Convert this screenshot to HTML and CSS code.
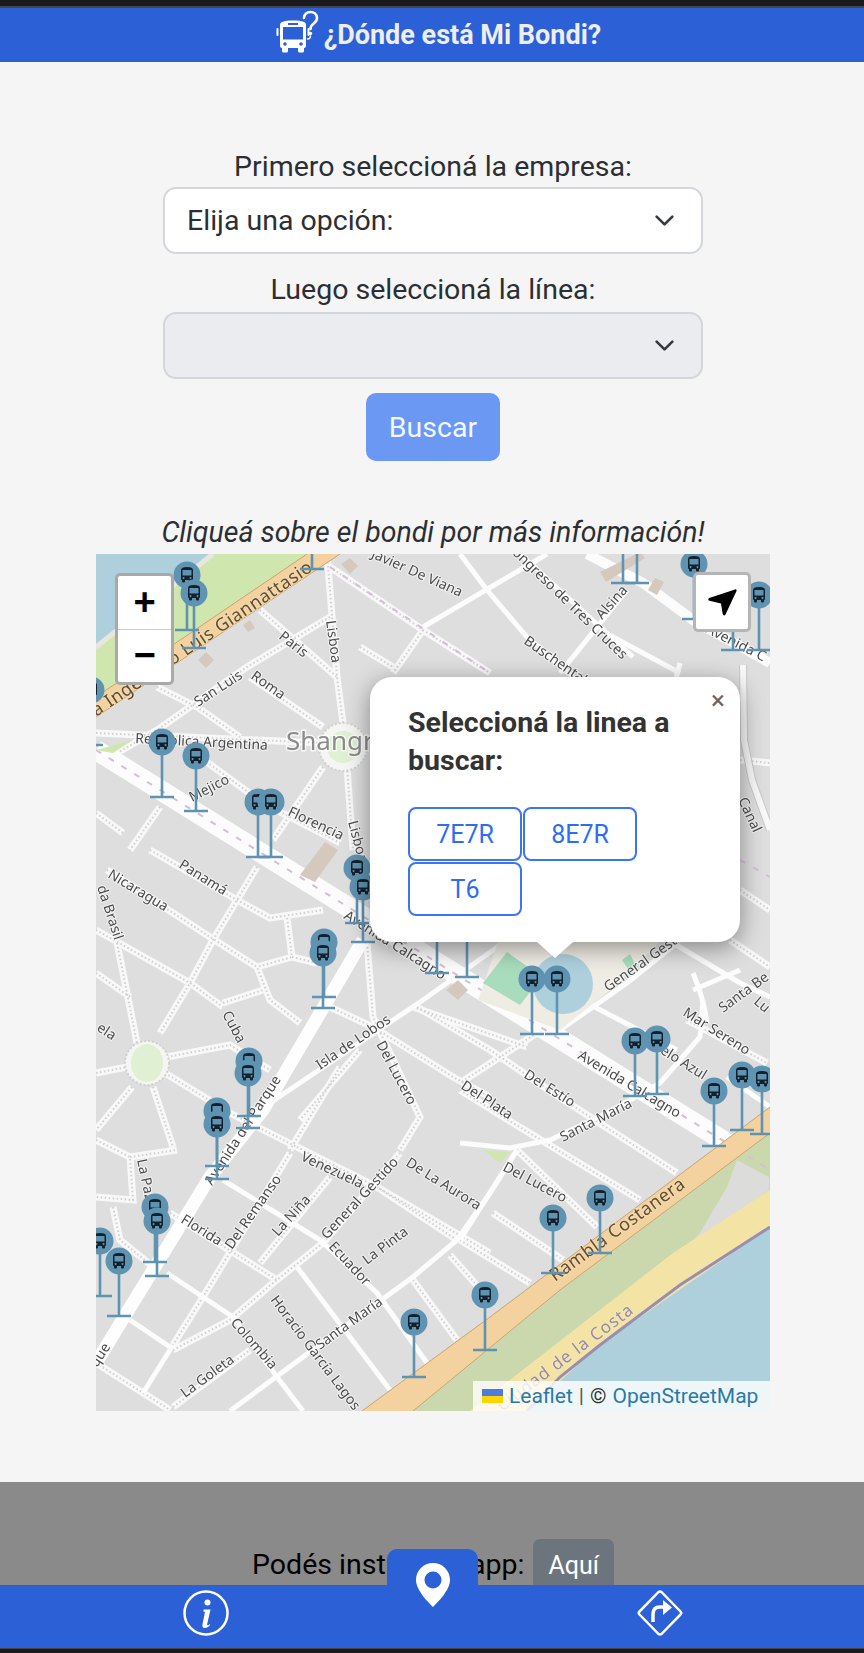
FILE: index.html
```html
<!DOCTYPE html>
<html lang="es">
<head>
<meta charset="utf-8">
<title>¿Dónde está Mi Bondi?</title>
<link rel="stylesheet" href="styles.css">
</head>
<body>
<div class="page">
  <div class="statusbar"></div>
  <header class="header">
    <svg class="logo" viewBox="0 0 44 42" aria-hidden="true">
      <path class="logo-fill" fill-rule="evenodd" d="M5 14c0-3 3-4.500 13-4.500S31 11 31 14v21a2 2 0 0 1-2 2v3a1.500 1.500 0 0 1-1.500 1.500h-3A1.500 1.500 0 0 1 23 40v-3H13v3a1.500 1.500 0 0 1-1.500 1.500h-3A1.500 1.500 0 0 1 7 40v-3a2 2 0 0 1-2-2ZM13 12v2h10v-2ZM8 16v12.500h20V16Z"/>
      <circle class="logo-hole" cx="10" cy="33" r="1.800"/>
      <circle class="logo-hole" cx="26" cy="33" r="1.800"/>
      <rect class="logo-fill" x="1.500" y="17" width="2" height="8" rx="1"/>
      <rect class="logo-fill" x="32.500" y="17" width="2" height="8" rx="1"/>
      <path class="logo-stroke" d="M29 7c0-8 13-8 13 0 0 6-6.500 5-6.500 11"/>
      <circle class="logo-fill" cx="35.500" cy="22.500" r="1.700"/>
      <path class="logo-stroke thin" d="M35.500 25c0 2-1 3-3 3"/>
    </svg>
    <h1 class="title">¿Dónde está Mi Bondi?</h1>
  </header>

  <main class="main">
    <form class="form">
      <label class="label">Primero seleccioná la empresa:</label>
      <div class="select">
        <span>Elija una opción:</span>
        <svg class="chevron" viewBox="0 0 16 16"><path d="M2 5l6 6 6-6"/></svg>
      </div>
      <label class="label label-second">Luego seleccioná la línea:</label>
      <div class="select select-disabled">
        <span></span>
        <svg class="chevron" viewBox="0 0 16 16"><path d="M2 5l6 6 6-6"/></svg>
      </div>
      <button class="search" type="button">Buscar</button>
    </form>

    <p class="hint">Cliqueá sobre el bondi por más información!</p>

    <section class="map">
      <svg class="tiles" viewBox="96 554 674 857" aria-label="Mapa">
        <defs>
          <g id="m">
            <path class="pole" d="M0 0V55M-12 55H12"/>
            <circle class="pin" r="13.500"/>
            <path class="bus" fill-rule="evenodd" d="M-6-5c0-2 2-3 6-3s6 1 6 3v9a1 1 0 0 1-1 1v1.500a1 1 0 0 1-1 1h-1a1 1 0 0 1-1-1V5h-4v1.500a1 1 0 0 1-1 1h-1a1 1 0 0 1-1-1V5a1 1 0 0 1-1-1ZM-4.500-5V0.500h9V-5ZM-3.500 2a1 1 0 1 0 .1 0ZM3.500 2a1 1 0 1 0 .1 0Z"/>
          </g>
          <g id="walks">
            <path d="M330 567L423 630 490 673"/>
            <path d="M327 554L337 677 343 723"/>
            <path d="M260 610L337 677"/>
            <path d="M330 617L247 667 157 730 117 753"/>
            <path d="M157 687L197 707 240 737"/>
            <path d="M250 677L323 727"/>
            <path d="M96 733L323 743"/>
            <path d="M200 757L263 803 340 843"/>
            <path d="M323 767L273 840"/>
            <path d="M347 767L353 850"/>
            <path d="M160 807L130 850"/>
            <path d="M96 813L123 833"/>
            <path d="M423 630L393 673"/>
            <path d="M360 647L393 667"/>
            <path d="M107 870L210 937 257 967 270 1000 300 1023"/>
            <path d="M330 1007L373 1027 453 1077 490 1097"/>
            <path d="M150 850L237 900 270 918 323 910"/>
            <path d="M287 918L292 957 257 967"/>
            <path d="M292 957L317 963"/>
            <path d="M96 930L190 983 223 1007"/>
            <path d="M96 973L130 997"/>
            <path d="M223 1003L263 990"/>
            <path d="M257 867L213 940 190 983 160 1033"/>
            <path d="M117 943L137 1043"/>
            <path d="M167 1057L230 1045 270 1070"/>
            <path d="M96 1073L127 1067"/>
            <path d="M132 1087L96 1130"/>
            <path d="M153 1087L173 1147"/>
            <path d="M165 1073L230 1113 297 1147"/>
            <path d="M340 1067L290 1150"/>
            <path d="M367 943L373 1017 420 1117 400 1150"/>
            <path d="M417 1007L490 1050 553 1093 677 1173"/>
            <path d="M96 1140L130 1157 133 1200 96 1197"/>
            <path d="M130 1157L177 1150"/>
            <path d="M290 1153L203 1297 173 1345"/>
            <path d="M113 1207L120 1240 157 1270"/>
            <path d="M173 1350L230 1320 273 1283 323 1243"/>
            <path d="M457 1240L377 1187 297 1147"/>
            <path d="M377 1187L490 1253"/>
            <path d="M400 1153L323 1243"/>
            <path d="M330 1177L260 1263"/>
            <path d="M413 1280L457 1340"/>
            <path d="M450 1255L487 1297"/>
            <path d="M96 1363L170 1410"/>
            <path d="M173 1407L250 1350"/>
            <path d="M170 1213L277 1280"/>
            <path d="M460 1090L513 1123 640 1200"/>
            <path d="M493 1213L563 1260"/>
            <path d="M460 1240L530 1283"/>
            <path d="M517 1150L597 1227"/>
            <path d="M537 1033L460 1083"/>
            <path d="M687 1020L767 1063"/>
            <path d="M740 760L770 763"/>
            <path d="M740 890L770 910"/>
            <path d="M730 940L770 967"/>
            <path d="M413 1007L527 1047"/>
            <path d="M360 1050L300 1120"/>
          </g>
        </defs>

        <g class="base">
          <rect class="land" x="96" y="554" width="674" height="857"/>

          <use class="walk-base" href="#walks"/>
          <use class="walk-dots" href="#walks"/>

          <g class="road">
            <path d="M423 627L547 554"/>
            <path d="M460 554L487 590 527 637 573 677"/>
            <path d="M560 673L627 590"/>
            <path d="M520 554L633 657"/>
            <path d="M600 630L680 673"/>
            <path d="M680 663L673 690"/>
            <path d="M270 1103L423 1000 503 943"/>
            <path d="M223 1180L320 1240 377 1293 427 1363"/>
            <path d="M167 1273L233 1317 277 1377 303 1411"/>
            <path d="M130 1320L170 1347"/>
            <path d="M297 1267L390 1390"/>
            <path d="M173 1345L143 1393"/>
            <path d="M230 1411L303 1357 413 1277 457 1240 490 1193 517 1150"/>
            <path d="M460 1143L510 1148 550 1140 607 1113 660 1083 700 1037 703 1000"/>
            <path d="M517 1150L460 1240"/>
            <path d="M727 1077L770 1107"/>
            <path d="M673 943L740 983 770 997"/>
            <path d="M693 973C700 990 705 1005 707 1023"/>
            <path d="M587 1003L677 1050"/>
            <path d="M560 1030L627 983 677 943"/>
            <path d="M693 990L740 970"/>
          </g>
          <g class="road-thick">
            <path d="M587 554L643 583 693 620 770 663"/>
          </g>
          <path class="canal-edge" d="M743 665L744 740 752 780 770 830"/>
          <path class="canal" d="M743 665L744 740 752 780 770 830"/>

          <path class="ave-wide" d="M96 750L735 1148"/>
          <path class="ave-dash" d="M96 750L770 1170"/>
          <path class="ave-dash" d="M330 567L490 673"/>
          <path class="ave-dash" d="M740 860L770 877"/>
          <path class="park-road" d="M363 940L263 1110 210 1177 96 1363"/>

          <circle class="plaza" cx="147" cy="1063" r="22"/>
          <ellipse class="plaza-in" cx="147" cy="1063" rx="16" ry="19"/>
          <circle class="plaza" cx="343" cy="747" r="24"/>
          <circle class="plaza-in" cx="343" cy="747" r="16"/>

          <polygon class="green" points="96,650 213,554 340,554 96,717"/>
          <polygon class="water" points="96,554 213,554 96,645"/>
          <polyline class="shore" points="96,647 213,554"/>
          <polygon class="orange" points="96,697 307,554 340,554 96,717"/>
          <polyline class="orange-edge" points="96,697 307,554"/>
          <polyline class="orange-edge" points="96,717 340,554"/>
          <polygon class="green" points="96,750 133,740 113,753"/>
          <polygon class="green" points="483,1150 510,1152 500,1163"/>

          <polygon class="green2" points="413,1411 560,1290 770,1133 770,1411"/>
          <polygon class="patch" points="673,1260 700,1233 727,1187 737,1160 769,1177 769,1190"/>
          <path class="ave-dash" d="M735 1148L770 1170"/>
          <polygon class="sand" points="470,1411 493,1393 673,1253 770,1190 770,1230 600,1345 527,1411"/>
          <polygon class="water" points="527,1411 600,1345 770,1227 770,1411"/>
          <polyline class="shoreline" points="527,1411 560,1377 600,1345 680,1285 770,1227"/>
          <polygon class="orange" points="362,1411 490,1317 770,1107 770,1133 560,1290 413,1411"/>
          <polyline class="orange-edge" points="362,1411 490,1317 770,1107"/>
          <polyline class="orange-edge" points="413,1411 560,1290 770,1133"/>

          <polygon class="park" points="498,942 660,942 610,990 560,1030 478,1000"/>
          <polygon class="pitch" points="483,983 507,952 542,977 520,1005"/>
          <ellipse class="pond" cx="563" cy="984" rx="30" ry="30"/>
          <polygon class="pitch" points="622,960 630,954 637,968 630,972"/>

          <polygon class="bld" points="300,875 315,882 338,850 325,842"/>
          <polygon class="bld" points="341,564 350,558 358,566 350,574"/>
          <polygon class="bld" points="198,660 206,652 214,660 206,668"/>
          <polygon class="bld" points="243,625 250,620 255,628 248,632"/>
          <polygon class="bld" points="648,590 655,578 664,582 657,595"/>
          <polygon class="bld" points="446,990 458,980 468,990 458,1000"/>
          <polygon class="bld" points="600,572 640,552 645,558 606,582"/>

          <text class="lbl lbl-main" text-anchor="end" transform="translate(314 570) rotate(-34)">Avenida Ingeniero Luis Giannattasio</text>
          <text class="lbl" text-anchor="end" transform="translate(460 597) rotate(24)">Javier De Viana</text>
          <text class="lbl" transform="translate(278 638) rotate(38)">Paris</text>
          <text class="lbl" transform="translate(326 621) rotate(82)">Lisboa</text>
          <text class="lbl" transform="translate(198 707) rotate(-33)">San Luis</text>
          <text class="lbl" transform="translate(250 678) rotate(35)">Roma</text>
          <text class="lbl" transform="translate(135 743) rotate(3)">República Argentina</text>
          <text class="lbl-town" x="286" y="750">Shangrilá</text>
          <text class="lbl" transform="translate(192 802) rotate(-27)">Mejico</text>
          <text class="lbl" transform="translate(287 815) rotate(25)">Florencia</text>
          <text class="lbl" transform="translate(348 822) rotate(75)">Lisboa</text>
          <text class="lbl" transform="translate(178 867) rotate(32)">Panamá</text>
          <text class="lbl" transform="translate(107 877) rotate(31)">Nicaragua</text>
          <text class="lbl" transform="translate(97 887) rotate(72)">da Brasil</text>
          <text class="lbl" transform="translate(222 1014) rotate(62)">Cuba</text>
          <text class="lbl" transform="translate(96 1030) rotate(33)">ela</text>
          <text class="lbl" transform="translate(320 1070) rotate(-34)">Isla de Lobos</text>
          <text class="lbl" transform="translate(376 1044) rotate(62)">Del Lucero</text>
          <text class="lbl" transform="translate(460 1088) rotate(33)">Del Plata</text>
          <text class="lbl" transform="translate(343 918) rotate(32)">Avenida Calcagno</text>
          <text class="lbl" transform="translate(212 1186) rotate(-57)">Avenida del Parque</text>
          <text class="lbl" transform="translate(137 1160) rotate(78)">La Paz</text>
          <text class="lbl" transform="translate(180 1222) rotate(32)">Florida</text>
          <text class="lbl" transform="translate(232 1250) rotate(-55)">Del Remanso</text>
          <text class="lbl" transform="translate(278 1237) rotate(-48)">La Niña</text>
          <text class="lbl" transform="translate(327 1240) rotate(-47)">General Gestido</text>
          <text class="lbl" transform="translate(300 1160) rotate(25)">Venezuela</text>
          <text class="lbl" transform="translate(405 1165) rotate(32)">De La Aurora</text>
          <text class="lbl" transform="translate(328 1247) rotate(47)">Ecuador</text>
          <text class="lbl" transform="translate(367 1265) rotate(-37)">La Pinta</text>
          <text class="lbl" transform="translate(320 1350) rotate(-36)">Santa María</text>
          <text class="lbl" transform="translate(270 1300) rotate(53)">Horacio García Lagos</text>
          <text class="lbl" transform="translate(230 1323) rotate(49)">Colombia</text>
          <text class="lbl" transform="translate(185 1398) rotate(-36)">La Goleta</text>
          <text class="lbl" transform="translate(97 1368) rotate(-57)">que</text>
          <text class="lbl" transform="translate(577 1058) rotate(31)">Avenida Calcagno</text>
          <text class="lbl" transform="translate(523 1077) rotate(32)">Del Estío</text>
          <text class="lbl" transform="translate(563 1142) rotate(-27)">Santa María</text>
          <text class="lbl" transform="translate(502 1170) rotate(28)">Del Lucero</text>
          <text class="lbl-big" transform="translate(555 1282) rotate(-36)">Rambla Costanera</text>
          <text class="lbl-area" text-anchor="end" transform="translate(635 1312) rotate(-37)">Ciudad de la Costa</text>
          <text class="lbl" transform="translate(608 992) rotate(-35)">General Gestido</text>
          <text class="lbl" transform="translate(682 1015) rotate(32)">Mar Sereno</text>
          <text class="lbl" transform="translate(723 1013) rotate(-36)">Santa Be</text>
          <text class="lbl" transform="translate(753 1003) rotate(40)">Lu</text>
          <text class="lbl" text-anchor="end" transform="translate(703 1080) rotate(32)">Cielo Azul</text>
          <text class="lbl" text-anchor="end" transform="translate(622 660) rotate(44)">Congreso de Tres Cruces</text>
          <text class="lbl" transform="translate(602 620) rotate(-48)">Alsina</text>
          <text class="lbl" transform="translate(523 643) rotate(35)">Buschental</text>
          <text class="lbl" transform="translate(705 632) rotate(27)">Avenida C</text>
          <text class="lbl" transform="translate(738 800) rotate(65)">Canal</text>
        </g>

        <use href="#m" x="312" y="514"/>
        <use href="#m" x="623" y="528"/>
        <use href="#m" x="637" y="528"/>
        <use href="#m" x="187" y="575"/>
        <use href="#m" x="194" y="593"/>
        <use href="#m" x="91" y="690"/>
        <use href="#m" x="694" y="564"/>
        <use href="#m" x="759" y="595"/>
        <use href="#m" x="733" y="595"/>
        <use href="#m" x="162" y="742"/>
        <use href="#m" x="196" y="756"/>
        <use href="#m" x="258" y="802"/>
        <use href="#m" x="271" y="802"/>
        <use href="#m" x="357" y="868"/>
        <use href="#m" x="363" y="887"/>
        <use href="#m" x="437" y="918"/>
        <use href="#m" x="467" y="922"/>
        <use href="#m" x="324" y="942"/>
        <use href="#m" x="323" y="953"/>
        <use href="#m" x="532" y="979"/>
        <use href="#m" x="557" y="979"/>
        <use href="#m" x="657" y="1039"/>
        <use href="#m" x="635" y="1041"/>
        <use href="#m" x="249" y="1061"/>
        <use href="#m" x="248" y="1073"/>
        <use href="#m" x="742" y="1075"/>
        <use href="#m" x="762" y="1079"/>
        <use href="#m" x="714" y="1091"/>
        <use href="#m" x="217" y="1111"/>
        <use href="#m" x="217" y="1124"/>
        <use href="#m" x="155" y="1207"/>
        <use href="#m" x="157" y="1221"/>
        <use href="#m" x="600" y="1198"/>
        <use href="#m" x="553" y="1218"/>
        <use href="#m" x="100" y="1241"/>
        <use href="#m" x="119" y="1261"/>
        <use href="#m" x="485" y="1295"/>
        <use href="#m" x="414" y="1322"/>
      </svg>

      <div class="zoom">
        <span class="zoom-btn zoom-in">+</span>
        <span class="zoom-btn">−</span>
      </div>

      <div class="locate">
        <svg viewBox="0 0 32 32"><path d="M29 3.500c1-.6 2 .4 1.500 1.500L19.500 28.500c-.7 1.500-2.500 1.200-2.800-.4L15 17.500 3.500 14.800c-1.500-.4-1.700-2.300-.3-2.900Z"/></svg>
      </div>

      <div class="popup">
        <button class="popup-close" type="button">×</button>
        <h2 class="popup-title">Seleccioná la linea a buscar:</h2>
        <div class="lines">
          <button class="line" type="button">7E7R</button>
          <button class="line" type="button">8E7R</button>
          <button class="line" type="button">T6</button>
        </div>
      </div>

      <div class="attrib">
        <svg class="flag" viewBox="0 0 12 8"><path class="flag-b" d="M0 0h12v4H0z"/><path class="flag-y" d="M0 4h12v4H0z"/></svg>
        <a>Leaflet</a><span class="sep">|</span><span>©</span><a>OpenStreetMap</a>
      </div>
    </section>
  </main>

  <section class="install">
    <span class="install-text">Podés instalar la app:</span>
    <button class="install-btn" type="button">Aquí</button>
  </section>

  <nav class="nav">
    <svg class="nav-icon" viewBox="0 0 46 46">
      <circle class="nav-line" cx="23" cy="23" r="21.500"/>
      <circle class="nav-fill" cx="24.500" cy="12.500" r="3"/>
      <path class="nav-fill" d="M20.500 19.500h7l-3.300 14.500c-.3 1.700 1 1.700 2.500.2l.6.6c-2 2.700-4.300 3.600-6.300 3.200-1.600-.4-1.900-2-1.500-3.700l2.500-12.300-1.500-.5Z"/>
    </svg>
    <div class="nav-tab">
      <svg class="pin-icon" viewBox="0 0 34 44"><path fill-rule="evenodd" d="M17 0C7.500 0 0 7.500 0 17c0 10 12 22 17 27 5-5 17-17 17-27C34 7.500 26.500 0 17 0Zm0 8.500a8.500 8.500 0 1 1 0 17 8.500 8.500 0 0 1 0-17Z"/></svg>
    </div>
    <svg class="nav-icon" viewBox="0 0 46 46">
      <path class="nav-line" d="M20.500 3c1.500-2 3.500-2 5 0l18 18.500c1 1 1 2 0 3l-18 18.500c-1.500 2-3.500 2-5 0L2.500 24.500c-1-1-1-2 0-3Z"/>
      <path class="nav-line wide" d="M16 32V24c0-5 3-7 7-7h5"/>
      <path class="nav-fill" d="M26 10l9 7.500-9 7.500Z"/>
    </svg>
  </nav>
  <div class="statusbar-bottom"></div>
</div>
</body>
</html>
```

FILE: styles.css
```css
* { box-sizing: border-box; }

html, body { margin: 0; padding: 0; }

body {
  background: #f5f5f5;
  font-family: Roboto, "Liberation Sans", sans-serif;
  color: #212529;
}

.page {
  position: relative;
  width: 864px;
  height: 1653px;
  overflow: hidden;
  display: flex;
  flex-direction: column;
}

.statusbar {
  height: 8px;
  background: #1a1a1e;
  border-bottom: 2px solid #44464c;
}

.header {
  height: 54px;
  background: #2b60d6;
  display: flex;
  align-items: center;
  justify-content: center;
  gap: 5px;
  padding-left: 12px;
}

.logo { width: 44px; height: 42px; margin-top: -6px; overflow: visible; }
.logo-fill { fill: #fff; }
.logo-hole { fill: #2b60d6; }
.logo-stroke { fill: none; stroke: #fff; stroke-width: 2.600; stroke-linecap: round; }
.logo-stroke.thin { stroke-width: 1.400; }

.title {
  margin: 0;
  font-size: 27px;
  font-weight: 700;
  color: #eeeeee;
}

.main {
  flex: 1;
  padding: 84px 0 0 96px;
  display: flex;
  flex-direction: column;
  align-items: flex-start;
}

.form {
  width: 674px;
  display: flex;
  flex-direction: column;
  align-items: center;
}

.label {
  font-size: 28.500px;
  line-height: 41px;
  height: 41px;
  color: #2b2f33;
}

.label-second { margin-top: 15px; height: 43px; }

.select {
  width: 540px;
  height: 67px;
  flex: none;
  border: 2px solid #d3d6da;
  border-radius: 13px;
  background: #fff;
  display: flex;
  align-items: center;
  justify-content: space-between;
  padding: 0 26px 0 22px;
  font-size: 28.500px;
  color: #2b2f33;
}

.select-disabled { background: #eaecef; }

.chevron { width: 21px; height: 21px; fill: none; stroke: #343a40; stroke-width: 2; stroke-linecap: round; stroke-linejoin: round; }

.search {
  margin-top: 14px;
  width: 134px;
  height: 68px;
  border: 0;
  border-radius: 10px;
  background: #6b98f3;
  color: #f4f7fe;
  font: 400 28.500px Roboto, sans-serif;
}

.hint {
  width: 674px;
  margin: 53px 0 0;
  height: 40px;
  line-height: 38px;
  text-align: center;
  font-size: 28.500px;
  font-style: italic;
  white-space: nowrap;
  color: #2b2f33;
}

.map {
  position: relative;
  width: 674px;
  height: 857px;
  overflow: hidden;
  background: #dfdede;
}

.tiles { display: block; width: 674px; height: 857px; }

.base { filter: blur(.55px); }

.land { fill: #dfdede; }
.green { fill: #cfe7ae; }
.green2 { fill: #cbd8ad; }
.water { fill: #aed0dd; }
.shore { fill: none; stroke: #e8e6dd; stroke-width: 5; }
.orange { fill: #f3d29f; }
.orange-edge { fill: none; stroke: #c9a56e; stroke-width: 1; }
.patch { fill: #dcdcda; }
.sand { fill: #f3e4a6; }
.shoreline { fill: none; stroke: #9a8eb0; stroke-width: 3; }
.park { fill: #efece4; }
.pitch { fill: #a9dcbd; }
.pond { fill: #aed0dd; }
.bld { fill: #d5c9bd; }

.walk-base { fill: none; stroke: #f8f8f8; stroke-width: 7; }
.walk-dots { fill: none; stroke: #cfcfcf; stroke-width: 2; stroke-dasharray: 1.500 2.500; }

.road path { fill: none; stroke: #fcfcfc; stroke-width: 5; }
.road-thick path { fill: none; stroke: #fcfcfc; stroke-width: 10; }
.canal { fill: none; stroke: #f8f8f8; stroke-width: 6; }
.canal-edge { fill: none; stroke: #c8c8c8; stroke-width: 8; }

.ave-wide { fill: none; stroke: #fcfcfc; stroke-width: 20; }
.ave-dash { fill: none; stroke: #d3bfd6; stroke-width: 2; stroke-dasharray: 6 9; }
.park-road { fill: none; stroke: #fefefe; stroke-width: 13; }

.plaza { fill: #f5f5f3; stroke: #d0d0d0; stroke-width: 2; stroke-dasharray: 2 2; }
.plaza-in { fill: #dff0d3; }

.lbl, .lbl-main, .lbl-big, .lbl-area {
  font-family: "Noto Sans", "Open Sans", sans-serif;
  paint-order: stroke;
  stroke: #fff;
  stroke-width: 2px;
  stroke-opacity: .65;
}

.lbl { font-size: 14px; fill: #4a4a4a; }
.lbl-main { font-size: 18px; fill: #5c4d35; letter-spacing: .5px; stroke: #f7dfb5; }
.lbl-big { font-size: 18px; fill: #5c4d35; letter-spacing: .5px; stroke: #f7dfb5; }
.lbl-area { font-size: 17px; fill: #9a88a8; letter-spacing: 1px; stroke: #f5e8b5; }
.lbl-town {
  font-family: "Noto Sans", sans-serif;
  font-size: 26px;
  fill: #8b8b8b;
  paint-order: stroke;
  stroke: #fff;
  stroke-width: 3px;
  stroke-opacity: .7;
}

.pole { fill: none; stroke: #5f93b2; stroke-width: 2.600; }
.pin { fill: #5f93b2; }
.bus { fill: #14202a; }

.zoom {
  position: absolute;
  left: 19px;
  top: 19px;
  width: 59px;
  height: 112px;
  border: 3px solid #a9a9a9;
  border-radius: 5px;
  background: #fff;
  display: flex;
  flex-direction: column;
}

.zoom-btn {
  flex: 1;
  display: flex;
  align-items: center;
  justify-content: center;
  font: 700 38px "Liberation Sans", sans-serif;
  color: #000;
}

.zoom-in { border-bottom: 1px solid #ccc; }

.locate {
  position: absolute;
  left: 597px;
  top: 18px;
  width: 58px;
  height: 60px;
  border: 3px solid #b5b5b5;
  border-radius: 5px;
  background: #fff;
  display: flex;
  align-items: center;
  justify-content: center;
}

.locate svg { width: 32px; height: 32px; fill: #000; }

.popup {
  position: absolute;
  left: 274px;
  top: 123px;
  width: 370px;
  height: 265px;
  background: #fff;
  border-radius: 22px;
  padding: 27px 38px 0;
  box-shadow: 0 6px 24px rgba(0, 0, 0, .4);
}

.popup::after {
  content: "";
  position: absolute;
  left: 167px;
  bottom: -16px;
  width: 0;
  height: 0;
  border-left: 18px solid transparent;
  border-right: 18px solid transparent;
  border-top: 16px solid #fff;
}

.popup-close {
  position: absolute;
  right: 12px;
  top: 8px;
  width: 20px;
  height: 28px;
  padding: 0;
  border: 0;
  background: none;
  color: #666;
  font: 400 26px Roboto, sans-serif;
}

.popup-title {
  margin: 0;
  font-size: 28.500px;
  line-height: 38px;
  font-weight: 700;
  color: #333;
}

.lines {
  display: flex;
  flex-wrap: wrap;
  width: 240px;
  margin-top: 27px;
  gap: 1px;
}

.line {
  width: 114px;
  height: 54px;
  border: 2px solid #3b74f5;
  border-radius: 8px;
  background: #fff;
  color: #2f6df0;
  font: 400 25px Roboto, sans-serif;
  padding: 0;
}

.attrib {
  position: absolute;
  right: 0;
  bottom: 0;
  width: 297px;
  height: 30px;
  padding: 0 9px;
  background: rgba(255, 255, 255, .8);
  display: flex;
  align-items: center;
  gap: 6px;
  font-size: 21px;
  color: #333;
}

.attrib a { color: #2a7aa8; }
.sep { color: #555; }
.flag { width: 21px; height: 14px; }
.flag-b { fill: #4c7be1; }
.flag-y { fill: #ffd500; }

.install {
  position: absolute;
  left: 0;
  top: 1482px;
  width: 864px;
  height: 120px;
  background: #8a8a8a;
  display: flex;
  justify-content: flex-start;
  align-items: flex-start;
  padding: 57px 0 0 252px;
  gap: 9px;
}

.install-text {
  font-size: 28.500px;
  line-height: 40px;
  color: #000;
  margin-top: 6px;
}

.install-btn {
  width: 81px;
  height: 52px;
  border: 0;
  border-radius: 7px;
  background: #6c757d;
  color: #fff;
  font: 400 25px Roboto, sans-serif;
}

.nav {
  position: absolute;
  left: 0;
  top: 1585px;
  width: 864px;
  height: 63px;
  background: #2b60d6;
}

.nav-icon { position: absolute; top: 5px; width: 46px; height: 46px; }
.nav-icon:first-child { left: 183px; }
.nav-icon:last-of-type { left: 637px; }

.nav-line { fill: none; stroke: #fff; stroke-width: 2.500; }
.nav-line.wide { stroke-width: 3.500; }
.nav-fill { fill: #fff; }

.nav-tab {
  position: absolute;
  left: 387px;
  top: -36px;
  width: 91px;
  height: 60px;
  background: #2b60d6;
  border-radius: 10px 10px 0 0;
  display: flex;
  justify-content: center;
  padding-top: 14px;
}

.pin-icon { width: 34px; height: 44px; fill: #fff; }

.statusbar-bottom {
  position: absolute;
  left: 0;
  bottom: 0;
  width: 864px;
  height: 5px;
  background: #1a1a1e;
  border-top: 1px solid #44464c;
}
```
